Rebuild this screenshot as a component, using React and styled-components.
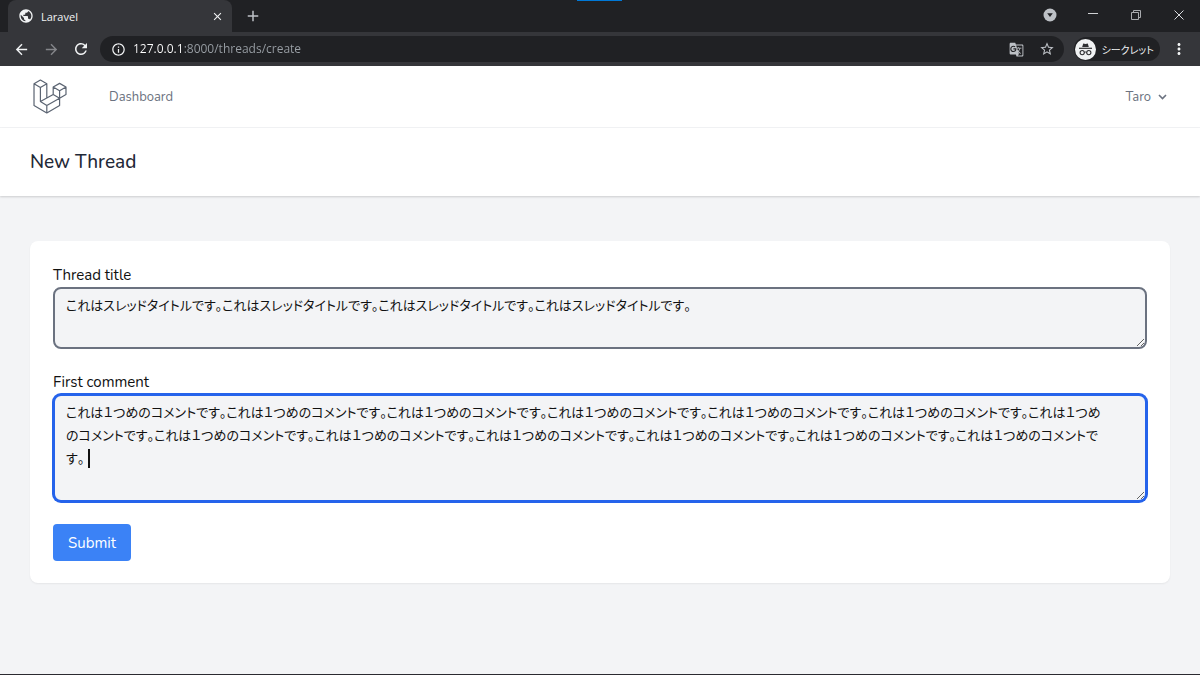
import React, { useState } from 'react';
import styled, { createGlobalStyle, css } from 'styled-components';
import {
  MdAdd,
  MdArrowBack,
  MdArrowForward,
  MdClose,
  MdGTranslate,
  MdInfoOutline,
  MdMoreVert,
  MdPublic,
  MdRefresh,
  MdStarBorder,
} from 'react-icons/md';

const TITLE = 'これはスレッドタイトルです。'.repeat(4);
const SENTENCE = 'これは１つめのコメントです。';
const COMMENT = [
  SENTENCE.repeat(6) + 'これは１つめ',
  'のコメントです。' + SENTENCE.repeat(5) + 'これは１つめのコメントで',
  'す。',
].join('\n');

const Logo = () => (
  <svg width="34" height="35" viewBox="100 57 101 104" fill="none">
    <path
      d="M122 60L141 71L122 82L103 71ZM103 71V136L141 158L179 136V114M122 82V124L141 136V158M141 71V114M122 124L160 103M141 136L179 114M179 70L198 81V103L179 114L160 103V81ZM160 81L179 92L198 81M179 92V114"
      stroke="#5b6472"
      strokeWidth="3.6"
      strokeLinejoin="round"
    />
  </svg>
);

const Incognito = () => (
  <svg width="21" height="21" viewBox="0 0 21 21" fill="none">
    <circle cx="10.5" cy="10.5" r="10.5" fill="#f1f3f4" />
    <path d="M7.2 8L8.2 4.4L10.5 5L12.8 4.4L13.8 8Z" fill="#303134" />
    <path d="M4 9.3H17" stroke="#303134" strokeWidth="1.2" />
    <circle cx="7.2" cy="13.6" r="2.1" stroke="#303134" strokeWidth="1.1" />
    <circle cx="13.8" cy="13.6" r="2.1" stroke="#303134" strokeWidth="1.1" />
    <path d="M9.3 13.4Q10.5 12.6 11.7 13.4" stroke="#303134" strokeWidth="1" />
  </svg>
);

const Browser = () => (
  <Chrome>
    <TabStrip>
      <Tab>
        <MdPublic size={16} />
        <span>Laravel</span>
        <IconButton aria-label="Close tab" $size={14}>
          <MdClose size={13} />
        </IconButton>
      </Tab>
      <IconButton aria-label="New tab" $size={18} $dim>
        <MdAdd size={18} />
      </IconButton>
      <Accent />
      <WindowControls>
        <IconButton aria-label="Search tabs" $size={14}>
          <svg width="14" height="14" viewBox="0 0 14 14">
            <circle cx="7" cy="7" r="6.5" fill="#bdc1c6" />
            <path d="M4.2 5.2H9.8L7 9Z" fill="#202124" />
          </svg>
        </IconButton>
        <IconButton aria-label="Minimize" $size={14}>
          <svg width="12" height="12" viewBox="0 0 12 12">
            <path d="M1 4.5H11" stroke="#cfd1d4" />
          </svg>
        </IconButton>
        <IconButton aria-label="Restore" $size={14}>
          <svg width="12" height="12" viewBox="0 0 12 12" fill="none">
            <path d="M1.5 3.5H8.5V10.5H1.5ZM3.5 3.5V1.5H10.5V8.5H8.5" stroke="#a9abae" />
          </svg>
        </IconButton>
        <IconButton aria-label="Close" $size={14}>
          <svg width="12" height="12" viewBox="0 0 12 12">
            <path d="M1.5 1.5L10.5 10.5M10.5 1.5L1.5 10.5" stroke="#dadce0" />
          </svg>
        </IconButton>
      </WindowControls>
    </TabStrip>
    <Toolbar>
      <NavButtons>
        <IconButton aria-label="Back" $size={18}>
          <MdArrowBack size={17} />
        </IconButton>
        <IconButton aria-label="Forward" $size={18} $faint>
          <MdArrowForward size={17} />
        </IconButton>
        <IconButton aria-label="Reload" $size={18}>
          <MdRefresh size={18} />
        </IconButton>
      </NavButtons>
      <AddressBar>
        <MdInfoOutline size={15} />
        <Address
          aria-label="Address"
          defaultValue="127.0.0.1:8000/threads/create"
          spellCheck={false}
        />
        <IconButton aria-label="Translate" $size={16} $dim>
          <MdGTranslate size={15} />
        </IconButton>
        <IconButton aria-label="Bookmark" $size={16} $dim>
          <MdStarBorder size={16} />
        </IconButton>
      </AddressBar>
      <Profile>
        <Incognito />
        シークレット
      </Profile>
      <IconButton aria-label="Menu" $size={18}>
        <MdMoreVert size={18} />
      </IconButton>
    </Toolbar>
  </Chrome>
);

const App = () => {
  const [title, setTitle] = useState(TITLE);
  const [comment, setComment] = useState(COMMENT);

  return (
    <Page>
      <GlobalStyle />
      <Browser />
      <Navbar>
        <a href="#home" aria-label="Home">
          <Logo />
        </a>
        <NavLink href="#dashboard">Dashboard</NavLink>
        <UserButton>
          Taro
          <svg width="9" height="6" viewBox="0 0 9 6" fill="none">
            <path d="M1 1L4.5 4.5L8 1" stroke="#6b7280" strokeWidth="1.6" />
          </svg>
        </UserButton>
      </Navbar>
      <Header>
        <h2>New Thread</h2>
      </Header>
      <Main>
        <Card onSubmit={(e) => e.preventDefault()}>
          <Field>
            <label htmlFor="title">Thread title</label>
            <TextArea
              id="title"
              rows={2}
              spellCheck={false}
              value={title}
              onChange={(e) => setTitle(e.target.value)}
            />
          </Field>
          <Field>
            <label htmlFor="comment">First comment</label>
            <Editor>
              <TextArea
                id="comment"
                rows={4}
                $active
                spellCheck={false}
                value={comment}
                onChange={(e) => setComment(e.target.value)}
              />
              <Caret />
            </Editor>
          </Field>
          <Submit type="submit">Submit</Submit>
        </Card>
      </Main>
      <Taskbar />
    </Page>
  );
};

export default App;

const GlobalStyle = createGlobalStyle`
  * {
    box-sizing: border-box;
  }
  body {
    margin: 0;
    background: #f3f4f6;
    font-family: Nunito, 'Open Sans', 'Noto Sans CJK JP', sans-serif;
    font-size: 15px;
    line-height: 23px;
    color: #111;
  }
  button,
  input,
  textarea {
    font-family: inherit;
  }
  svg {
    display: block;
    flex-shrink: 0;
  }
`;

const Page = styled.div`
  min-height: 100vh;
  display: flex;
  flex-direction: column;
`;

const Chrome = styled.div`
  background: #35363a;
  color: #f1f3f4;
  font-family: 'Open Sans', 'Noto Sans CJK JP', sans-serif;
`;

const TabStrip = styled.div`
  position: relative;
  height: 32px;
  padding: 0 14px 0 8px;
  display: flex;
  align-items: center;
  gap: 12px;
  background: #202124;
`;

const Tab = styled.div`
  height: 32px;
  width: 224px;
  padding: 0 8px 0 10px;
  display: flex;
  align-items: center;
  gap: 7px;
  border-radius: 8px 8px 0 0;
  background: #35363a;
  font-size: 11px;

  span {
    flex: 1;
  }
`;

const Accent = styled.div`
  position: absolute;
  top: 0;
  left: 50%;
  width: 45px;
  height: 1px;
  margin-left: -23px;
  background: #0078d7;
`;

const WindowControls = styled.div`
  margin-left: auto;
  display: flex;
  gap: 29px;
  padding-bottom: 2px;
`;

const IconButton = styled.button`
  width: ${({ $size }) => $size}px;
  height: ${({ $size }) => $size}px;
  padding: 0;
  border: none;
  display: flex;
  align-items: center;
  justify-content: center;
  background: transparent;
  color: ${({ $dim, $faint }) => ($faint ? '#85868a' : $dim ? '#bdc1c6' : '#f1f3f4')};
  cursor: pointer;
`;

const Toolbar = styled.div`
  height: 34px;
  padding: 0 12px;
  display: flex;
  align-items: center;
  gap: 10px;
`;

const NavButtons = styled.div`
  display: flex;
  gap: 12px;
`;

const AddressBar = styled.div`
  flex: 1;
  height: 26px;
  padding: 0 9px 0 11px;
  display: flex;
  align-items: center;
  gap: 14px;
  border-radius: 13px;
  background: #202124;
`;

/* host is brighter than the port and path */
const Address = styled.input`
  flex: 1;
  min-width: 0;
  margin-left: -7px;
  padding: 0;
  border: none;
  outline: none;
  font-size: 12px;
  line-height: 20px;
  color: transparent;
  background: linear-gradient(90deg, #fff 51px, #9aa0a6 51px);
  background-clip: text;
  -webkit-background-clip: text;
`;

const Profile = styled.button`
  height: 24px;
  padding: 0 6px 0 1px;
  display: flex;
  align-items: center;
  gap: 6px;
  border: none;
  border-radius: 12px;
  background: #202124;
  color: #f1f3f4;
  font-size: 10px;
  font-feature-settings: 'palt';
`;

const Navbar = styled.nav`
  height: 62px;
  padding: 0 33px;
  display: flex;
  align-items: center;
  border-bottom: 1px solid #f3f4f6;
  background: #fff;
`;

const NavLink = styled.a`
  margin-left: 42px;
  padding-top: 2px;
  font-size: 13px;
  color: #6b7280;
  text-decoration: none;
`;

const UserButton = styled.button`
  margin-left: auto;
  padding: 0;
  display: flex;
  align-items: center;
  gap: 7px;
  border: none;
  background: transparent;
  font-size: 13px;
  color: #6b7280;
`;

const Header = styled.header`
  padding: 22px 30px;
  background: #fff;
  box-shadow: 0 1px 2px rgba(0, 0, 0, 0.16);

  h2 {
    margin: 0;
    font-size: 19px;
    line-height: 24px;
    font-weight: 500;
    color: #1f2937;
  }
`;

const Main = styled.main`
  flex: 1;
  padding: 45px 30px;
`;

const Card = styled.form`
  padding: 23px 23px 22px;
  display: flex;
  flex-direction: column;
  gap: 22px;
  border-radius: 8px;
  background: #fff;
  box-shadow: 0 1px 2px rgba(0, 0, 0, 0.06);
`;

const Field = styled.div`
  display: flex;
  flex-direction: column;
`;

const TextArea = styled.textarea`
  display: block;
  width: 100%;
  padding: 6px 11px;
  border: 2px solid #6b7280;
  border-radius: 8px;
  outline: none;
  background: #f3f4f6;
  color: #111;
  font-size: 13px;
  line-height: 23px;
  font-feature-settings: 'palt';
  font-kerning: none;
  ${({ $active }) =>
    $active &&
    css`
      border-color: #2563eb;
      box-shadow: 0 0 0 1px #2563eb;
    `}
`;

const Editor = styled.div`
  position: relative;
`;

const Caret = styled.span`
  position: absolute;
  left: 35px;
  top: 55px;
  width: 2px;
  height: 19px;
  background: #111;
`;

const Submit = styled.button`
  align-self: flex-start;
  height: 37px;
  padding: 0 15px;
  border: none;
  border-radius: 4px;
  background: #3b82f6;
  color: #fff;
  font-size: 15px;
`;

const Taskbar = styled.footer`
  height: 1px;
  background: #2b2a30;
`;
